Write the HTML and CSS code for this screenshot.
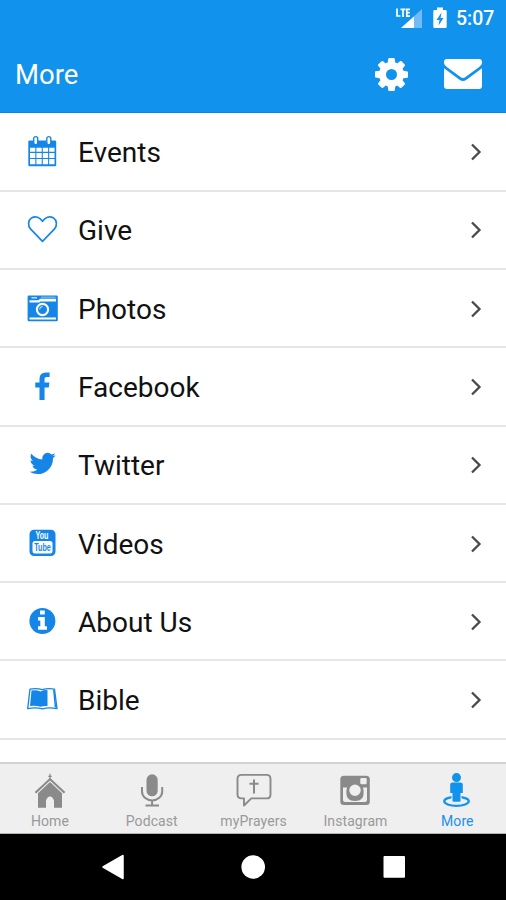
FILE: index.html
```html
<!DOCTYPE html>
<html lang="en">
<head>
<meta charset="utf-8">
<title>More</title>
<link rel="stylesheet" href="styles.css">
</head>
<body>
<div class="screen">
  <header class="header">
    <div class="status">
      <svg class="signal" width="28" height="22" viewBox="396 6 28 22">
        <path d="M422 8v19H401z" fill="#6fbcf6"/>
        <path d="M414 15.500V27H401z" fill="#fff"/>
        <path d="M395 5h15.500v11.500H395z" fill="#1192ec"/>
        <path d="M397 7.500v7.500h3.500M400.500 8.300h5M403 8.300V16M410 8.300h-3.200v6.800h3.200M406.800 11.700h3" fill="none" stroke="#fff" stroke-width="1.700"/>
      </svg>
      <svg class="battery" width="14" height="22" viewBox="0 0 14 22">
        <path d="M4 0.500h6v2.500h2.500q1.200 0 1.200 1.200v15.600q0 1.200-1.200 1.200h-11q-1.200 0-1.200-1.200V4.200Q.3 3 1.500 3H4z" fill="#fff"/>
        <path d="M8.500 5.500 3.500 13H6.500L5.500 18.500 10.500 11H7.600z" fill="#1192ec"/>
      </svg>
      <span class="clock">5:07</span>
    </div>
    <div class="titlebar">
      <h1 class="title">More</h1>
      <svg class="gear" width="33" height="33" viewBox="128 128 1536 1536" fill="#fff"><path d="M1152 896q0-106-75-181t-181-75-181 75-75 181 75 181 181 75 181-75 75-181zm512-109v222q0 12-8 23t-20 13l-185 28q-19 54-39 91 35 50 107 138 10 12 10 25t-9 23q-27 37-99 108t-94 71q-12 0-26-9l-138-108q-44 23-91 38-16 136-29 186-7 28-36 28h-222q-14 0-24.500-8.500t-11.500-21.500l-28-184q-49-16-90-37l-141 107q-10 9-25 9-14 0-25-11-126-114-165-168-7-10-7-23 0-12 8-23 15-21 51-66.500t54-70.500q-27-50-41-99l-183-27q-13-2-21-12.500t-8-23.500v-222q0-12 8-23t19-13l186-28q14-46 39-92-40-57-107-138-10-12-10-24 0-10 9-23 26-36 98.500-107.500t94.500-71.500q13 0 26 10l138 107q44-23 91-38 16-136 29-186 7-28 36-28h222q14 0 24.500 8.500t11.500 21.500l28 184q49 16 90 37l142-107q9-9 24-9 13 0 25 10 129 119 165 170 7 8 7 22 0 12-8 23-15 21-51 66.500t-54 70.500q26 50 41 98l183 28q13 2 21 12.500t8 23.500z"/></svg>
      <svg class="mail" width="38" height="30" viewBox="0 0 38 30" fill="#fff">
        <path d="M3 0h32q3 0 3 3v1Q38 5.800 35.500 7.700L21.500 18q-2.500 1.800-5 0L2.500 7.700Q0 5.800 0 4V3Q0 0 3 0z"/>
        <path d="M0 9.300 15.500 20.800q3.500 2.400 7 0L38 9.300V27q0 3-3 3H3q-3 0-3-3z"/>
      </svg>
    </div>
  </header>

  <main class="list">
    <div class="row">
      <svg class="icon" viewBox="0 0 32 34">
        <path d="M3.500 5.500h25.500q1.200 0 1.200 1.200V30q0 1.200-1.200 1.200H3.500q-1.200 0-1.200-1.200V6.700q0-1.200 1.200-1.200z" fill="#1586e8"/>
        <path d="M4 12.700h5.300v4H4zM10.400 12.700h5.300v4h-5.300zM16.800 12.700h5.300v4h-5.300zM23.200 12.700h5.300v4h-5.300zM4 17.900h5.300v5H4zM10.400 17.900h5.300v5h-5.300zM16.800 17.900h5.300v5h-5.300zM23.200 17.900h5.300v5h-5.300zM4 24.100h5.300v5.200H4zM10.400 24.100h5.300v5.200h-5.300zM16.800 24.100h5.300v5.200h-5.300zM23.200 24.100h5.300v5.200h-5.300z" fill="#fff"/>
        <g fill="#fff" stroke="#1586e8" stroke-width="1.400"><rect x="7.700" y="1.600" width="4" height="8.200" rx="2"/><rect x="20.800" y="1.600" width="4" height="8.200" rx="2"/></g>
      </svg>
      <span class="label">Events</span>
      <svg class="chevron" viewBox="0 0 12 20"><path d="M2 2.500 9.500 10 2 17.500"/></svg>
    </div>
    <div class="row">
      <svg class="icon" viewBox="0 0 32 34"><path d="M16.500 28.300 4.700 16.200C1.500 12.500 2 7.300 5.500 4.900 9.500 2.500 14 4.300 16.500 8.300 19 4.300 23.500 2.500 27.500 4.900c3.500 2.400 4 7.600.8 11.300z" fill="none" stroke="#1586e8" stroke-width="1.700" stroke-linejoin="round"/></svg>
      <span class="label">Give</span>
      <svg class="chevron" viewBox="0 0 12 20"><path d="M2 2.500 9.500 10 2 17.500"/></svg>
    </div>
    <div class="row">
      <svg class="icon" viewBox="0 0 32 34">
        <rect x="1.600" y="3.600" width="30.200" height="25.600" rx="1.200" fill="#1586e8"/>
        <path d="M3.500 8.200h9l1.500-1.500H30v2.800H14.500l-1.500 1H3.500zM3.500 25.500H30v1.900H3.500z" fill="#fff"/>
        <path d="M5.500 5h5.500v1.400H5.500zM15 4.800h14.500v.8H15z" fill="#b8dcfa"/>
        <circle cx="16.500" cy="17.500" r="5.600" fill="#1586e8" stroke="#fff" stroke-width="2.100"/>
        <path d="M13.700 17.500a3 3 0 0 1 3-3" fill="none" stroke="#b8dcfa" stroke-width="1.200"/>
      </svg>
      <span class="label">Photos</span>
      <svg class="chevron" viewBox="0 0 12 20"><path d="M2 2.500 9.500 10 2 17.500"/></svg>
    </div>
    <div class="row">
      <svg class="icon" viewBox="0 0 32 34"><path transform="translate(1.300 2.400) scale(.0166)" fill="#1586e8" d="M1343 12v264h-157q-86 0-116 36t-30 108v189h293l-39 296h-254v759h-306v-759h-255v-296h255v-218q0-186 104-288.500t277-102.500q147 0 228 12z"/></svg>
      <span class="label">Facebook</span>
      <svg class="chevron" viewBox="0 0 12 20"><path d="M2 2.500 9.500 10 2 17.500"/></svg>
    </div>
    <div class="row">
      <svg class="icon" viewBox="0 0 32 34"><path transform="translate(1.700 .6) scale(.0166)" fill="#1586e8" d="M1684 408q-67 98-162 167 1 14 1 42 0 130-38 259.500t-115.500 248.500-184.500 210.500-258 146-323 54.500q-271 0-496-145 35 4 78 4 225 0 401-138-105-2-188-64.500t-114-159.500q33 5 61 5 43 0 85-11-112-23-185.500-111.500t-73.500-205.500v-4q68 38 146 41-66-44-105-115t-39-154q0-88 44-163 121 149 294.500 238.500t371.500 99.500q-8-38-8-74 0-134 94.500-228.500t228.500-94.500q140 0 236 102 109-21 205-78-37 115-142 178 93-10 186-50z"/></svg>
      <span class="label">Twitter</span>
      <svg class="chevron" viewBox="0 0 12 20"><path d="M2 2.500 9.500 10 2 17.500"/></svg>
    </div>
    <div class="row">
      <svg class="icon" viewBox="0 0 32 34">
        <rect x="3.500" y="2.800" width="26" height="26.200" rx="4.500" fill="#1586e8"/>
        <rect x="6.500" y="14" width="20" height="12.500" rx="2.500" fill="#fff"/>
        <text class="tube" x="9.500" y="12.300" textLength="13" lengthAdjust="spacingAndGlyphs" fill="#fff">You</text>
        <text class="tube" x="8.300" y="24.200" textLength="16.500" lengthAdjust="spacingAndGlyphs" fill="#1586e8">Tube</text>
      </svg>
      <span class="label">Videos</span>
      <svg class="chevron" viewBox="0 0 12 20"><path d="M2 2.500 9.500 10 2 17.500"/></svg>
    </div>
    <div class="row">
      <svg class="icon" viewBox="0 0 32 34">
        <circle cx="16.400" cy="16" r="13" fill="#1586e8"/>
        <path d="M14 5.500h4.800v4H14zM12 12h6.800v9.300h2.200v3.400h-9v-3.400h2.300v-5.900H12z" fill="#fff"/>
      </svg>
      <span class="label">About Us</span>
      <svg class="chevron" viewBox="0 0 12 20"><path d="M2 2.500 9.500 10 2 17.500"/></svg>
    </div>
    <div class="row">
      <svg class="icon" viewBox="0 0 32 34">
        <path d="M4 6.200q6.500-1.500 12.300.5 6-2 12.200-.5L31 25.700q-8-1.700-14.700.2-6.300-1.900-14.600-.2z" fill="#fff" stroke="#1586e8" stroke-width="1.300" stroke-linejoin="round"/>
        <path d="M5.500 7.600q4.500-.8 9 .8 3.500-1.600 7-1.200V23q-4-.3-7 .8-4.300-1.400-10.500-.8z" fill="#1586e8"/>
        <path d="M27.800 7 29.500 24.500" stroke="#1586e8" stroke-width="1.500"/>
      </svg>
      <span class="label">Bible</span>
      <svg class="chevron" viewBox="0 0 12 20"><path d="M2 2.500 9.500 10 2 17.500"/></svg>
    </div>
  </main>

  <nav class="tabs">
    <div class="tab">
      <svg class="tabicon" viewBox="0 0 36 36" fill="#8a8a8a">
        <path d="M18 .8v7M16.300 3.300h3.400" stroke="#8a8a8a" stroke-width="1.200"/>
        <path d="M18 4.800 33.300 19l-1.500 1.400L18 7.600 4.200 20.400 2.700 19z"/>
        <path d="M18 9 30 20.200V34.800h-8V27.500q-1.500-4-4-4t-4 4v7.300H6V20.200z"/>
      </svg>
      <span>Home</span>
    </div>
    <div class="tab">
      <svg class="tabicon" viewBox="0 0 36 36">
        <rect x="12.500" y="1.300" width="11.200" height="22" rx="5.600" fill="#8a8a8a"/>
        <path d="M8 14v4.500a10.100 9 0 0 0 20.200 0V14M18.100 27.500v5M11.500 32.500h13.500" fill="none" stroke="#8a8a8a" stroke-width="2"/>
      </svg>
      <span>Podcast</span>
    </div>
    <div class="tab">
      <svg class="tabicon" viewBox="0 0 36 36" fill="none" stroke="#8a8a8a" stroke-width="1.900">
        <path d="M5.500 1.900h25q4 0 4 4v15.500q0 4-4 4H15.300L8 32.500V25.400H5.500q-4 0-4-4V5.900q0-4 4-4z" stroke-linejoin="round"/>
        <path d="M18 6.500v14M13.500 10.800h9" stroke-width="2"/>
      </svg>
      <span>myPrayers</span>
    </div>
    <div class="tab">
      <svg class="tabicon" viewBox="0 0 36 36">
        <rect x="3.300" y="2.700" width="29.500" height="29.300" rx="3.500" fill="#8a8a8a"/>
        <path d="M6 14.500h4q-3 13.500 8 13.500t8-13.500h4V27q0 2-2 2H8q-2 0-2-2z" fill="#efefef"/>
        <rect x="23.300" y="5" width="6.400" height="6.300" rx="1.200" fill="#efefef"/>
        <circle cx="18" cy="17.300" r="7" fill="#efefef" stroke="#8a8a8a" stroke-width="2.500"/>
      </svg>
      <span>Instagram</span>
    </div>
    <div class="tab active">
      <svg class="tabicon" viewBox="0 0 36 36" fill="#1192ec">
        <ellipse cx="17.500" cy="28.300" rx="12.300" ry="4.500" fill="none" stroke="#1192ec" stroke-width="2.200"/>
        <path d="M13.500 21.500h8v8h-8z" stroke="#efefef" stroke-width="2"/>
        <circle cx="17.500" cy="4.600" r="4.500"/>
        <path d="M13.500 9.500h8q2.300 0 2.300 2.300V20h-2.300v8.500h-8V20h-2.300v-8.200q0-2.300 2.300-2.300z"/>
      </svg>
      <span>More</span>
    </div>
  </nav>

  <footer class="softkeys">
    <svg width="24" height="26" viewBox="0 0 24 26"><path d="M22 1.500v23L2 13z" fill="#fff" stroke="#fff" stroke-width="1.500" stroke-linejoin="round"/></svg>
    <svg width="24" height="26" viewBox="0 0 24 26"><circle cx="12.200" cy="13" r="11.800" fill="#fff"/></svg>
    <svg width="24" height="26" viewBox="0 0 24 26"><rect x="1.500" y="2" width="21.500" height="21.800" rx="1" fill="#fff"/></svg>
  </footer>
</div>
</body>
</html>
```

FILE: styles.css
```css
* { box-sizing: border-box; }

body {
  margin: 0;
  font-family: Roboto, "Liberation Sans", sans-serif;
  background: #fff;
}

.screen {
  width: 506px;
  height: 900px;
  display: flex;
  flex-direction: column;
  overflow: hidden;
}

.header {
  flex: none;
  height: 113px;
  background: #1192ec;
  border-bottom: 1px solid #0b86e0;
  color: #fff;
}

.status {
  height: 36px;
  display: flex;
  justify-content: flex-end;
  align-items: center;
  padding-right: 12px;
}

.signal { margin-right: 9px; }
.battery { margin-right: 9px; }

.clock {
  padding-top: 2px;
  font-size: 19.500px;
  font-weight: 500;
  line-height: 34px;
  width: 38px;
  white-space: nowrap;
}

.titlebar {
  height: 76px;
  display: flex;
  align-items: center;
  padding: 0 24px 0 15px;
}

.title {
  flex: 1;
  margin: 0;
  padding-top: 2px;
  font-size: 27.500px;
  font-weight: 400;
  line-height: 74px;
}

.gear { margin-right: 36px; }

.list {
  flex: 1;
  min-height: 0;
  padding-top: 0.400px;
  overflow: hidden;
}

.row {
  height: 78.300px;
  display: flex;
  align-items: center;
  padding: 1px 24px 0 26px;
  border-bottom: 2px solid #e6e6e6;
}

.icon {
  width: 32px;
  height: 34px;
  margin-right: 20px;
}

.label {
  flex: 1;
  padding-top: 2px;
  font-size: 28px;
  line-height: 72px;
  color: #111;
}

.chevron {
  width: 12px;
  height: 20px;
  fill: none;
  stroke: #4a4a4a;
  stroke-width: 2.300;
}

.tube {
  font-family: "Liberation Sans", sans-serif;
  font-weight: 700;
  font-size: 10.200px;
}

.tabs {
  flex: none;
  height: 72px;
  display: flex;
  margin-left: -1px;
  background: #efefef;
  border-top: 2px solid #d2d2d2;
  border-bottom: 1px solid #b5b5b5;
}

.tab {
  flex: 1 0 101.850px;
  display: flex;
  flex-direction: column;
  align-items: center;
  padding-top: 9px;
  font-size: 14px;
  line-height: 18px;
  letter-spacing: .1px;
  color: #999;
}

.tab.active { color: #2090ec; }

.tabicon {
  width: 36px;
  height: 36px;
  margin-bottom: 3px;
}

.softkeys {
  flex: none;
  height: 66px;
  background: #000;
  display: flex;
  justify-content: center;
  align-items: center;
  gap: 116.500px;
}
```
